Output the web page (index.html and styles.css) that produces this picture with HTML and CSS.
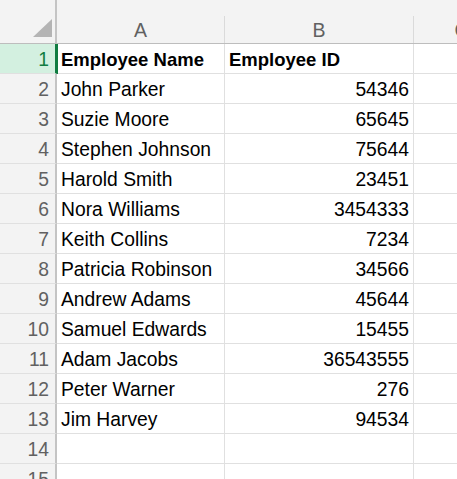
FILE: index.html
```html
<!DOCTYPE html>
<html>
<head>
<meta charset="utf-8">
<link rel="stylesheet" href="styles.css">
</head>
<body>
<div class="sheet">
  <div class="corner"><svg class="tri" width="19" height="18" viewBox="0 0 19 18"><polygon points="19,0 19,18 0,18" fill="#b4b4b4"/></svg></div>
  <div class="colhead"><span class="lbl">A</span></div>
  <div class="colhead"><span class="lbl">B</span></div>
  <div class="colhead"><span class="lbl">C</span></div>

  <div class="rowhead active">1</div><div class="cell bold">Employee Name</div><div class="cell bold">Employee ID</div><div class="cell"></div>
  <div class="rowhead">2</div><div class="cell">John Parker</div><div class="cell num">54346</div><div class="cell"></div>
  <div class="rowhead">3</div><div class="cell">Suzie Moore</div><div class="cell num">65645</div><div class="cell"></div>
  <div class="rowhead">4</div><div class="cell">Stephen Johnson</div><div class="cell num">75644</div><div class="cell"></div>
  <div class="rowhead">5</div><div class="cell">Harold Smith</div><div class="cell num">23451</div><div class="cell"></div>
  <div class="rowhead">6</div><div class="cell">Nora Williams</div><div class="cell num">3454333</div><div class="cell"></div>
  <div class="rowhead">7</div><div class="cell">Keith Collins</div><div class="cell num">7234</div><div class="cell"></div>
  <div class="rowhead">8</div><div class="cell">Patricia Robinson</div><div class="cell num">34566</div><div class="cell"></div>
  <div class="rowhead">9</div><div class="cell">Andrew Adams</div><div class="cell num">45644</div><div class="cell"></div>
  <div class="rowhead">10</div><div class="cell">Samuel Edwards</div><div class="cell num">15455</div><div class="cell"></div>
  <div class="rowhead">11</div><div class="cell">Adam Jacobs</div><div class="cell num">36543555</div><div class="cell"></div>
  <div class="rowhead">12</div><div class="cell">Peter Warner</div><div class="cell num">276</div><div class="cell"></div>
  <div class="rowhead">13</div><div class="cell">Jim Harvey</div><div class="cell num">94534</div><div class="cell"></div>
  <div class="rowhead">14</div><div class="cell"></div><div class="cell"></div><div class="cell"></div>
  <div class="rowhead">15</div><div class="cell"></div><div class="cell"></div><div class="cell"></div>
</div>
</body>
</html>
```
FILE: styles.css
```css
html, body {
  margin: 0;
  padding: 0;
  background: #ffffff;
  overflow: hidden;
}
.sheet {
  display: grid;
  grid-template-columns: 57px 168px 189px 96px;
  grid-template-rows: 44px repeat(15, 30px);
  font-family: "Liberation Sans", Arial, sans-serif;
  font-size: 19.3px;
  line-height: 22px;
  color: #000;
  width: 510px;
}
.corner {
  background: #f3f3f3;
  border-right: 2px solid #c4c4c4;
  border-bottom: 1px solid #bdbdbd;
  display: flex;
  justify-content: flex-end;
  align-items: flex-end;
  padding: 0 3px 6px 0;
  box-sizing: border-box;
}
.colhead {
  background: #f3f3f3;
  border-bottom: 1px solid #bdbdbd;
  padding-top: 16px;
  box-sizing: border-box;
  display: flex;
}
.colhead .lbl {
  flex: 1;
  border-right: 1px solid #dadada;
  display: flex;
  align-items: center;
  justify-content: center;
  padding-top: 1px;
  color: #616161;
  font-size: 19.5px;
}
.rowhead {
  background: #f3f3f3;
  border-right: 2px solid #c4c4c4;
  border-bottom: 1px solid #e0e0e0;
  box-sizing: border-box;
  display: flex;
  align-items: flex-end;
  justify-content: flex-end;
  padding: 0 6px 2px 0;
  color: #616161;
}
.rowhead.active {
  background: #d3f0e0;
  color: #107c41;
  border-right: 2px solid #107c41;
  box-shadow: 1px 0 0 #107c41;
  position: relative;
  z-index: 1;
}
.cell {
  border-right: 1px solid #e0e0e0;
  border-bottom: 1px solid #e0e0e0;
  box-sizing: border-box;
  display: flex;
  align-items: flex-end;
  padding: 0 4px 2px 4px;
  white-space: nowrap;
  overflow: hidden;
}
.cell.bold { font-weight: bold; font-size: 18.5px; }
.cell.num { justify-content: flex-end; }
```
